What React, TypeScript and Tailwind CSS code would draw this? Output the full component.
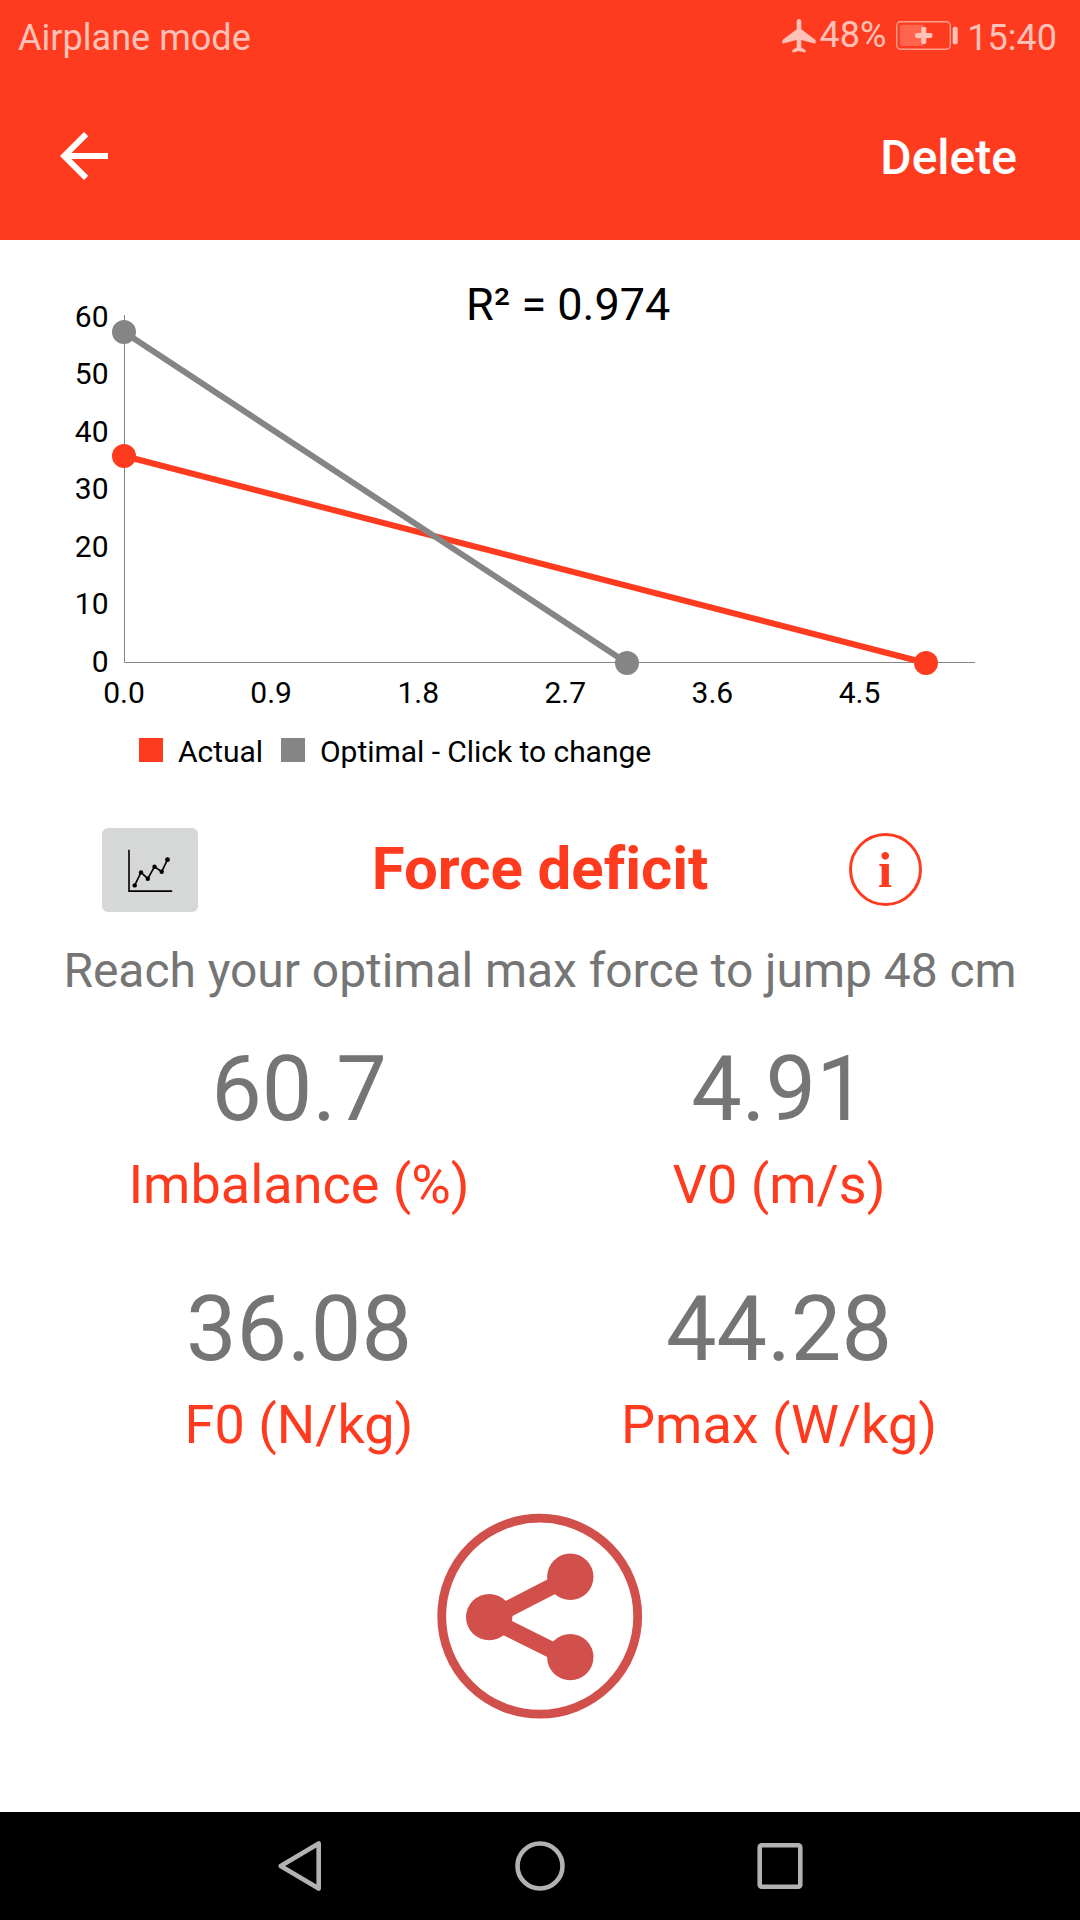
import type { ReactNode } from "react";

const yTicks = [60, 50, 40, 30, 20, 10, 0];
const xTicks = ["0.0", "0.9", "1.8", "2.7", "3.6", "4.5"];

const metrics = [
  { value: "60.7", label: "Imbalance (%)" },
  { value: "4.91", label: "V0 (m/s)" },
  { value: "36.08", label: "F0 (N/kg)" },
  { value: "44.28", label: "Pmax (W/kg)" },
];

const StatusBar = () => {
  return (
    <div className="flex h-[72px] items-start justify-between pl-[18px] pr-[23px] text-[36px] leading-[42px] text-[#ffc2b8]">
      <span className="mt-[17px] tracking-[0.03px]">Airplane mode</span>
      <div className="flex items-start">
        <svg className="mt-[19px]" width="34" height="34" viewBox="0 0 34 34" fill="currentColor">
          <path d="M17 0c1.3 0 2.3 1.1 2.3 2.6v7.7L32.9 20.6c.5.4.8.9.8 1.5v1.6c0 .6-.4.9-1 .7L19.3 21v7.6l3.8 2.1c.4.3.6.7.6 1.1v1c0 .5-.3.7-.8.6L17 32.1l-5.9 1.3c-.5.1-.8-.1-.8-.6v-1c0-.4.2-.8.6-1.1l3.8-2.1V21L1.3 24.4c-.6.2-1-.1-1-.7v-1.6c0-.6.3-1.1.8-1.5l13.6-10.3V2.6C14.7 1.1 15.7 0 17 0z" />
        </svg>
        <span className="ml-[4px] mt-[14px]">48%</span>
        <svg className="ml-[8.5px] mt-[20px]" width="63" height="32" viewBox="0 0 63 32" fill="currentColor">
          <rect x="1.7" y="1.7" width="53.6" height="27.6" rx="4" fill="none" stroke="currentColor" strokeOpacity="0.75" strokeWidth="1.4" />
          <rect x="5" y="4.7" width="24" height="21.3" rx="2" fillOpacity="0.3" />
          <rect x="20.3" y="12.9" width="17" height="5" rx="1.4" />
          <rect x="26.3" y="6.9" width="5" height="17" rx="1.4" />
          <rect x="57.7" y="6.7" width="5" height="17.6" rx="2" />
        </svg>
        <span className="ml-[9.5px] mt-[17px]">15:40</span>
      </div>
    </div>
  );
};

const Toolbar = () => {
  return (
    <div className="flex h-[168px] items-center justify-between pl-12 pr-[63px] text-white">
      <button aria-label="Back">
        <svg width="72" height="72" viewBox="0 0 24 24" fill="currentColor">
          <path d="M20 11H7.83l5.59-5.59L12 4l-8 8 8 8 1.41-1.41L7.83 13H20v-2z" />
        </svg>
      </button>
      <button className="pt-[3px] text-[48px] font-medium leading-[56px]">Delete</button>
    </div>
  );
};

const ProfileChart = () => {
  return (
    <svg className="block" width="1080" height="492" viewBox="0 240 1080 492">
      <text x="466" y="320" fontSize="45">R² = 0.974</text>
      {yTicks.map((tick, i) => (
        <text key={tick} x="108.5" y={327 + i * 57.45} fontSize="30" textAnchor="end">
          {tick}
        </text>
      ))}
      {xTicks.map((tick, i) => (
        <text key={tick} x={124 + i * 147.1} y="703" fontSize="30" textAnchor="middle">
          {tick}
        </text>
      ))}
      <path d="M124.5 315v347.5H975" fill="none" stroke="#858585" strokeWidth="1" />
      <g fill="#ff3b1f" stroke="#ff3b1f" strokeWidth="6">
        <path d="M124 456L926 663" />
        <circle cx="124" cy="456" r="12" stroke="none" />
        <circle cx="926" cy="663" r="12" stroke="none" />
      </g>
      <g fill="#858585" stroke="#858585" strokeWidth="6">
        <path d="M124 332L627 663" />
        <circle cx="124" cy="332" r="12" stroke="none" />
        <circle cx="627" cy="663" r="12" stroke="none" />
      </g>
    </svg>
  );
};

const LegendItem = ({ swatch, children }: { swatch: string; children: ReactNode }) => {
  return (
    <div className="flex items-center">
      <span className={`size-6 ${swatch}`} />
      <span className="ml-[15px] pt-[3px] text-[30px] leading-[36px] tracking-[-0.04px]">{children}</span>
    </div>
  );
};

const Summary = () => {
  return (
    <div className="mt-[60px] grid h-[84px] grid-cols-[1fr_auto_1fr] items-center pl-[102px] pr-[102px]">
      <button aria-label="Change chart" className="h-[84px] w-24 rounded-[6px] bg-[#d6d8d7]">
        <svg width="96" height="84" viewBox="0 -0.7 96 84" fill="none" stroke="#000" strokeWidth="1.6">
          <path d="M27 21v41.4h43.2" />
          <path d="M32.7 56.7L39 43.7l6.8 6.3 6.7-12 7.2 5 5.8-12" />
          <g fill="#000" stroke="none">
            <circle cx="32.7" cy="56.7" r="2.2" />
            <circle cx="39" cy="43.7" r="2.2" />
            <circle cx="45.8" cy="50" r="2.2" />
            <circle cx="52.5" cy="38" r="2.2" />
            <circle cx="59.7" cy="43" r="2.2" />
            <circle cx="65.5" cy="31" r="2.4" />
          </g>
        </svg>
      </button>
      <h1 className="pb-[3px] text-[60px] font-bold leading-[70px] tracking-[-0.05px] text-[#ff3b1f] [font-variant-ligatures:common-ligatures]">
        Force deficit
      </h1>
      <button
        aria-label="Info"
        className="mb-px mr-[56.5px] flex size-[73px] items-center justify-center justify-self-end rounded-full border-[3.5px] border-[#ff3b1f] font-['Liberation_Serif',serif] text-[51px] font-bold leading-[60px] text-[#ff3b1f]"
      >
        i
      </button>
    </div>
  );
};

const ShareButton = () => {
  return (
    <button aria-label="Share" className="mx-auto mt-[57px] block">
      <svg className="block" width="206" height="206" viewBox="437 1513.2 206 206" fill="#d2504b" stroke="#d2504b">
        <circle cx="539.7" cy="1616.4" r="98" fill="none" strokeWidth="8.8" />
        <path d="M570.5 1577L489 1619l81.5 40.6" fill="none" strokeWidth="16.5" />
        <g stroke="none">
          <circle cx="489.2" cy="1617.3" r="23.2" />
          <circle cx="570.3" cy="1577" r="23.2" />
          <circle cx="570.3" cy="1657.3" r="23.2" />
        </g>
      </svg>
    </button>
  );
};

const NavBar = () => {
  return (
    <nav className="flex h-[108px] items-center justify-center gap-[180px] bg-black">
      <svg width="60" height="60" viewBox="0 0 60 60" fill="none" stroke="#b2b2b2" strokeWidth="4.6" strokeLinejoin="round">
        <path d="M10.7 30L48.7 7.4v45.2z" />
      </svg>
      <svg width="60" height="60" viewBox="0 0 60 60" fill="none" stroke="#b2b2b2" strokeWidth="4.6">
        <circle cx="30" cy="30" r="22.5" />
      </svg>
      <svg width="60" height="60" viewBox="0 0 60 60" fill="none" stroke="#b2b2b2" strokeWidth="4.6">
        <rect x="9.7" y="9.3" width="40.6" height="41.4" rx="2" />
      </svg>
    </nav>
  );
};

export default function App() {
  return (
    <div className="flex h-[1920px] w-[1080px] flex-col overflow-hidden bg-white font-[Roboto,sans-serif] text-black">
      <header className="h-[240px] bg-[#ff3b1f]">
        <StatusBar />
        <Toolbar />
      </header>
      <main className="flex-1">
        <ProfileChart />
        <div className="flex h-9 items-center gap-[18px] pl-[139px]">
          <LegendItem swatch="bg-[#ff3b1f]">Actual</LegendItem>
          <LegendItem swatch="bg-[#858585]">Optimal - Click to change</LegendItem>
        </div>
        <Summary />
        <p className="mt-[31px] whitespace-nowrap text-center text-[48px] leading-[56px] tracking-[-0.05px] text-[#757575]">
          Reach your optimal max force to jump 48 cm
        </p>
        <div className="mt-[38px] grid grid-cols-2 gap-y-[61px] pl-[59px] pr-[61px] text-center">
          {metrics.map((metric) => (
            <div key={metric.label} className="flex flex-col gap-[11px]">
              <span className="text-[90px] leading-[105px] text-[#757575]">{metric.value}</span>
              <span className="text-[54px] leading-[63px] text-[#ff3b1f]">{metric.label}</span>
            </div>
          ))}
        </div>
        <ShareButton />
      </main>
      <NavBar />
    </div>
  );
}
